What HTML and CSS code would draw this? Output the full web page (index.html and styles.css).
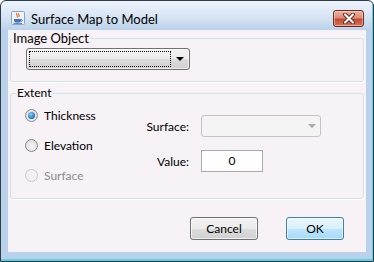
FILE: index.html
```html
<!DOCTYPE html>
<html lang="en">
<head>
    <meta charset="UTF-8">
    <title>Surface Map to Model</title>
    <link rel="stylesheet" href="styles.css">
</head>
<body>
    <div class="window">
        <div class="titlebar">
            <svg class="app-icon" width="14" height="14" viewBox="0 0 14 14">
                <rect x="0.5" y="0.5" width="13" height="13" rx="1" fill="#eef3fa" stroke="#8ca4c4"/>
                <path d="M6 2 C4.5 3.5 7.5 4.5 6 6.5 M8 2.5 C7 3.5 9 4.5 7.8 6" stroke="#e0701c" stroke-width="1.2" fill="none"/>
                <path d="M3 8 H10 V9.5 C10 11 8.5 11.5 6.5 11.5 C4.5 11.5 3 11 3 9.5 Z" fill="#3f74b8"/>
                <path d="M10 8.5 C11.8 8.5 11.8 10.5 10 10.3" stroke="#3f74b8" stroke-width="1" fill="none"/>
                <path d="M2.5 12.3 H11" stroke="#3f74b8" stroke-width="1"/>
            </svg>
            <span class="title">Surface Map to Model</span>
            <div class="close-btn">
                <svg width="16" height="11" viewBox="0 0 16 11">
                    <path d="M4 1.5 L12 9.5 M12 1.5 L4 9.5" stroke="#6b3024" stroke-width="4" stroke-linecap="round"/>
                    <path d="M4 1.5 L12 9.5 M12 1.5 L4 9.5" stroke="#ffffff" stroke-width="2" stroke-linecap="round"/>
                </svg>
            </div>
        </div>

        <div class="client">
            <div class="group">
                <div class="group-title">Image Object</div>
                <div class="combo combo-image">
                    <span class="combo-focus"></span>
                    <span class="combo-arrow"></span>
                </div>
            </div>

            <div class="group group-extent">
                <div class="group-title">Extent</div>
                <div class="extent-body">
                    <div class="radios">
                        <div class="radio-row">
                            <span class="radio radio-checked"></span>
                            <span>Thickness</span>
                        </div>
                        <div class="radio-row">
                            <span class="radio"></span>
                            <span>Elevation</span>
                        </div>
                        <div class="radio-row radio-row-disabled">
                            <span class="radio radio-disabled"></span>
                            <span>Surface</span>
                        </div>
                    </div>
                    <div class="fields">
                        <span class="field-label">Surface:</span>
                        <div class="combo combo-disabled">
                            <span class="combo-arrow"></span>
                        </div>
                        <span class="field-label">Value:</span>
                        <div class="textfield">0</div>
                    </div>
                </div>
            </div>

            <div class="buttons">
                <div class="btn btn-cancel">Cancel</div>
                <div class="btn btn-default">OK</div>
            </div>
        </div>
    </div>
</body>
</html>
```

FILE: styles.css
```css
body {
    margin: 0;
    font-family: Lato, "Liberation Sans", sans-serif;
    font-size: 12px;
    color: #000;
}

.window {
    width: 374px;
    height: 262px;
    box-sizing: border-box;
    display: flex;
    flex-direction: column;
    border: 1px solid #2f3b47;
    border-radius: 6px 6px 0 0;
    padding: 0 7px 9px 7px;
    background: linear-gradient(to bottom, #eef4fb 0, #d6e4f3 16px, #b9d1ea 30px, #b9d1ea 100%);
    box-shadow: inset -1px -2px 0 #5ccfe2;
}

.titlebar {
    height: 29px;
    display: flex;
    align-items: flex-start;
    flex-shrink: 0;
}

.app-icon {
    margin: 10px 0 0 3px;
}

.title {
    margin: 10px 0 0 6px;
    line-height: 16px;
    font-size: 13px;
    flex: 1;
}

.close-btn {
    width: 31px;
    height: 17px;
    box-sizing: border-box;
    margin: 9px 2px 0 0;
    border: 1px solid #6e2a1e;
    border-radius: 3px;
    background: linear-gradient(to bottom, #ebb3a5 0, #dc8c77 45%, #c44b34 55%, #d4735d 100%);
    box-shadow: inset 0 0 0 1px rgba(255, 220, 210, 0.5);
    display: flex;
    align-items: center;
    justify-content: center;
}

.client {
    flex: 1;
    background-color: #f6f2f6;
    padding: 0 2px;
    display: flex;
    flex-direction: column;
}

.group {
    margin-top: 8px;
    border: 1px solid #d5dfe5;
    border-radius: 3px;
    box-shadow: 1px 1px 0 #fff;
    padding-bottom: 11px;
}

.group-title {
    width: fit-content;
    margin: -8px 0 0 1px;
    padding: 0 1px;
    line-height: 14px;
    font-size: 13px;
    background-color: #f6f2f6;
}

.group-extent {
    margin-top: 11px;
    padding-bottom: 13px;
}

.group-extent .group-title {
    margin-left: 5px;
    font-size: 12px;
}

.combo {
    box-sizing: border-box;
    height: 22px;
    border: 1px solid #707070;
    border-radius: 3px;
    display: flex;
    align-items: center;
    background: linear-gradient(to bottom, #f2f2f2 0, #ebebeb 50%, #dddddd 50%, #cfcfcf 100%);
    box-shadow: inset 0 0 0 1px rgba(255, 255, 255, 0.6);
}

.combo-image {
    width: 164px;
    margin: 3px 0 0 15px;
    padding: 0 5px 0 2px;
}

.combo-focus {
    width: 142px;
    height: 16px;
    box-sizing: border-box;
    border: 1px dotted #000;
}

.combo-arrow {
    margin-left: auto;
    width: 0;
    height: 0;
    border-left: 4px solid transparent;
    border-right: 4px solid transparent;
    border-top: 4px solid #000;
}

.combo-disabled {
    width: 120px;
    border-color: #c4c4c4;
    background: #f4f4f4;
    box-shadow: none;
    padding-right: 4px;
}

.combo-disabled .combo-arrow {
    border-top-color: #a8a8a8;
}

.extent-body {
    display: flex;
    margin-top: 5px;
    padding-left: 14px;
}

.radios {
    width: 104px;
    display: flex;
    flex-direction: column;
    gap: 10px;
}

.radio-row {
    height: 20px;
    display: flex;
    align-items: center;
    gap: 6px;
}

.radio-row-disabled {
    color: #8d8d8d;
}

.radio {
    width: 13px;
    height: 13px;
    box-sizing: border-box;
    border-radius: 50%;
    border: 1px solid #8b8c8d;
    background: radial-gradient(circle at 50% 60%, #f6f6f6 0, #e3e3e3 60%, #cfcfcf 100%);
    display: flex;
    align-items: center;
    justify-content: center;
}

.radio-checked::after {
    content: "";
    width: 7px;
    height: 7px;
    border-radius: 50%;
    background: radial-gradient(circle at 40% 35%, #8fd6f8 0, #2f86c6 55%, #104f8a 100%);
}

.radio-disabled {
    border-color: #c9c9c9;
    background: #f1f1f1;
}

.fields {
    display: grid;
    grid-template-columns: 60px auto;
    column-gap: 12px;
    row-gap: 13px;
    align-items: center;
    align-content: start;
    padding-top: 10px;
}

.field-label {
    text-align: right;
}

.textfield {
    width: 62px;
    height: 22px;
    box-sizing: border-box;
    border: 1px solid #a9abb0;
    background-color: #fff;
    text-align: center;
    line-height: 20px;
}

.buttons {
    display: flex;
    justify-content: flex-end;
    gap: 28px;
    margin: 18px 20px 0 0;
}

.btn {
    height: 23px;
    box-sizing: border-box;
    border-radius: 3px;
    text-align: center;
    line-height: 21px;
}

.btn-cancel {
    width: 68px;
    border: 1px solid #707070;
    background: linear-gradient(to bottom, #f2f2f2 0, #ebebeb 50%, #dddddd 50%, #cfcfcf 100%);
    box-shadow: inset 0 0 0 1px rgba(255, 255, 255, 0.7);
}

.btn-default {
    width: 58px;
    border: 1px solid #3c7fb1;
    background: linear-gradient(to bottom, #eaf6fd 0, #d9f0fc 50%, #bee6fd 50%, #a7d9f5 100%);
    box-shadow: inset 0 0 0 1px rgba(255, 255, 255, 0.6);
}
```
